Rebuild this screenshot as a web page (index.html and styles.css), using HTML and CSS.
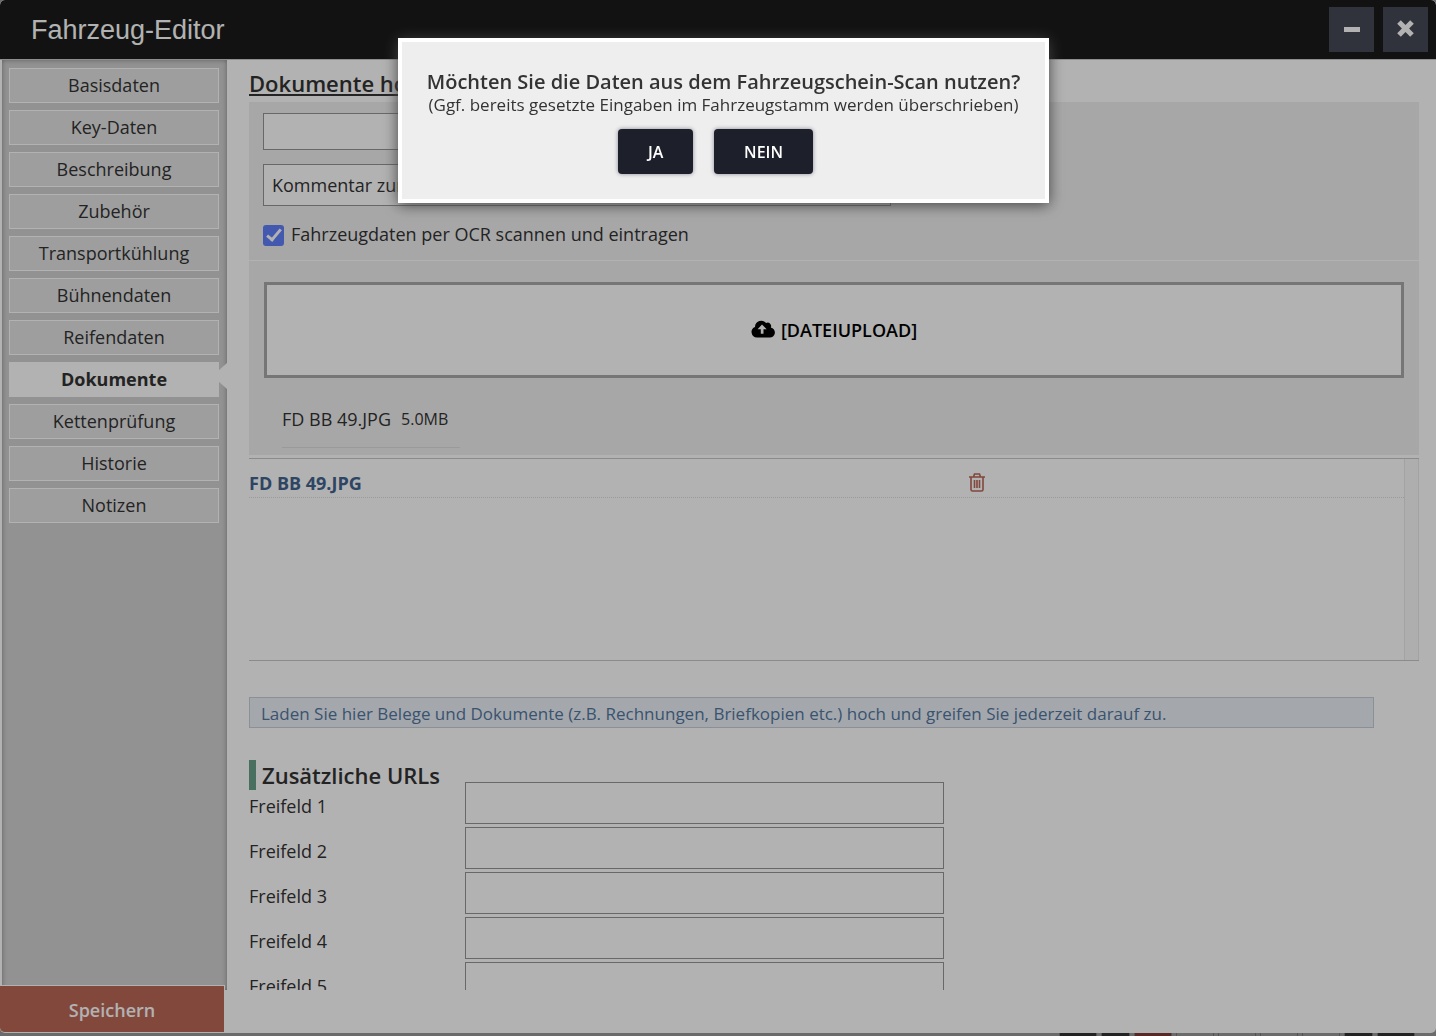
FILE: index.html
```html
<!DOCTYPE html>
<html lang="de">
<head>
  <meta charset="UTF-8">
  <meta name="viewport" content="width=device-width, initial-scale=1.0">
  <title>Fahrzeug-Editor</title>
  <link rel="stylesheet" href="styles.css">
</head>
<body>
<div class="editor">
  <header class="titlebar">
    <h1>Fahrzeug-Editor</h1>
    <div class="window-buttons">
      <button type="button" aria-label="Minimieren">
        <svg width="20" height="20" viewBox="0 0 20 20"><path d="M2 7h16v5H2z"/></svg>
      </button>
      <button type="button" aria-label="Schließen">
        <svg width="20" height="20" viewBox="0 0 20 20"><path d="M4.800 .2 9.500 4.900l4.700-4.700 3.600 3.600L13.100 8.500l4.700 4.700-3.600 3.600L9.500 12.100l-4.700 4.700-3.600-3.600L5.900 8.500 1.200 3.800z"/></svg>
      </button>
    </div>
  </header>

  <div class="body">
    <nav class="sidebar">
      <button type="button">Basisdaten</button>
      <button type="button">Key-Daten</button>
      <button type="button">Beschreibung</button>
      <button type="button">Zubehör</button>
      <button type="button">Transportkühlung</button>
      <button type="button">Bühnendaten</button>
      <button type="button">Reifendaten</button>
      <button type="button" class="active">Dokumente</button>
      <button type="button">Kettenprüfung</button>
      <button type="button">Historie</button>
      <button type="button">Notizen</button>
    </nav>

    <main class="content">
      <h2>Dokumente hochladen</h2>
      <div class="panel options">
        <select aria-label="Dokumentart"><option></option></select>
        <input type="text" class="comment" placeholder="Kommentar zum Dokument" aria-label="Kommentar">
        <div class="ocr">
          <input type="checkbox" id="ocr" checked>
          <label for="ocr">Fahrzeugdaten per OCR scannen und eintragen</label>
        </div>
      </div>
      <div class="panel upload">
        <button type="button" class="dropzone">
          <svg width="24" height="20" viewBox="0 0 24 20"><path fill-rule="evenodd" d="M6 17.500a5.500 5.500 0 0 1-2-10.600A6.400 6.400 0 0 1 15.200 2.900a3.500 3.500 0 0 1 4.600 4.700A5 5 0 0 1 18.500 17.500zM11 4.500 6.600 9.200H9.800v4.600h2.700V9.200h3.200z"/></svg>
          <span>[DATEIUPLOAD]</span>
        </button>
        <div class="queued"><span>FD BB 49.JPG</span><small>5.0MB</small></div>
      </div>

      <div class="documents">
        <div class="document-list">
          <div class="document">
            <a href="#">FD BB 49.JPG</a>
            <button type="button" aria-label="Löschen">
              <svg width="18" height="20" viewBox="0 0 18 20"><path d="M1 4h16M5.500 4l1-3h5l1 3M3 4v12.500a1.500 1.500 0 0 0 1.500 1.500h9a1.500 1.500 0 0 0 1.500-1.500V4M6.500 7v8M9 7v8M11.500 7v8"/></svg>
            </button>
          </div>
        </div>
        <div class="scroll-track"></div>
      </div>

      <p class="info">Laden Sie hier Belege und Dokumente (z.B. Rechnungen, Briefkopien etc.) hoch und greifen Sie jederzeit darauf zu.</p>

      <h3>Zusätzliche URLs</h3>
      <div class="field"><label for="frei1">Freifeld 1</label><input type="text" id="frei1"></div>
      <div class="field"><label for="frei2">Freifeld 2</label><input type="text" id="frei2"></div>
      <div class="field"><label for="frei3">Freifeld 3</label><input type="text" id="frei3"></div>
      <div class="field"><label for="frei4">Freifeld 4</label><input type="text" id="frei4"></div>
      <div class="field"><label for="frei5">Freifeld 5</label><input type="text" id="frei5"></div>
    </main>
  </div>

  <footer class="actions">
    <button type="button" class="save">Speichern</button>
  </footer>
</div>

<!-- Leiste hinter dem Editor -->
<div class="taskbar">
  <span class="dark"></span>
  <span class="dark short"></span>
  <span class="red"></span>
  <span></span>
  <span></span>
  <span></span>
  <span></span>
  <span class="dark short"></span>
  <span class="dark"></span>
</div>

<!-- Abfrage nach dem Scan -->
<div class="overlay">
  <div class="dialog" role="dialog" aria-labelledby="dialog-title">
    <h2 id="dialog-title">Möchten Sie die Daten aus dem Fahrzeugschein-Scan nutzen?</h2>
    <p>(Ggf. bereits gesetzte Eingaben im Fahrzeugstamm werden überschrieben)</p>
    <div class="dialog-buttons">
      <button type="button">JA</button>
      <button type="button">NEIN</button>
    </div>
  </div>
</div>
</body>
</html>
```
FILE: styles.css
```css
* {
  box-sizing: border-box;
}
body {
  margin: 0;
  height: 100vh;
  display: flex;
  flex-direction: column;
  overflow: hidden;
  background: #9a9a9a;
  color: #333;
  font-family: "Open Sans", sans-serif;
  font-size: 18px;
  line-height: 24px;
}
h1, h2, h3, p {
  margin: 0;
}
button, input, select {
  font: inherit;
  color: inherit;
}
button {
  cursor: pointer;
}
.editor {
  flex: 1;
  min-height: 0;
  display: flex;
  flex-direction: column;
  background: #fff;
  border-radius: 5px;
  overflow: hidden;
}

/* Titelleiste */
.titlebar {
  flex: none;
  display: flex;
  justify-content: space-between;
  align-items: center;
  height: 60px;
  padding: 0 8px 0 31px;
  background: #1a1a1a;
  border-bottom: 1px solid #ccc;
  border-radius: 5px 5px 0 0;
}
.titlebar h1 {
  color: #fff;
  font-family: "Liberation Sans", Arial, sans-serif;
  font-size: 27px;
  font-weight: normal;
}
.window-buttons {
  display: flex;
  gap: 9px;
}
.window-buttons button {
  display: flex;
  align-items: center;
  justify-content: center;
  width: 45px;
  height: 45px;
  padding: 0;
  border: none;
  background: #454955;
}
.window-buttons svg {
  fill: #fff;
}

.body {
  flex: 1;
  min-height: 0;
  display: flex;
}
.sidebar {
  flex: none;
  display: flex;
  flex-direction: column;
  gap: 7px;
  width: 225px;
  margin-left: 2px;
  padding: 8px 8px 0 7px;
  background: #d1d1d1;
  box-shadow: inset 0 0 5px #888;
}
.sidebar button {
  height: 35px;
  padding: 0 0 2px;
  background: #e3e3e3;
  border: 1px solid #fff;
}
.sidebar .active {
  position: relative;
  background: #fff;
  font-weight: bold;
}
.sidebar .active::after {
  content: "";
  position: absolute;
  top: 0;
  left: 100%;
  width: 9px;
  height: 26px;
  background: #fff;
  clip-path: polygon(0 8px, 100% 0, 100% 26px, 0 18px);
}

/* Inhalt */
.content {
  flex: 1;
  min-width: 0;
  padding: 8px 17px 0 22px;
  overflow: hidden;
}
.content h2 {
  height: 34px;
  font-size: 22px;
  font-weight: 600;
  line-height: 30px;
  text-decoration: underline;
}
.panel {
  background: #f0f0f0;
}
.options {
  display: flex;
  flex-direction: column;
  align-items: flex-start;
  padding: 11px 14px 14px;
  border-bottom: 1px solid #fff;
}
.options select,
.comment,
.field input {
  background: #fff;
  border: 1px solid #959595;
  border-radius: 0;
  padding: 0 8px;
}
.options select {
  width: 480px;
  height: 37px;
  margin-bottom: 14px;
}
.comment {
  width: 628px;
  height: 42px;
}
.comment::placeholder {
  color: #333;
}
.ocr {
  display: flex;
  align-items: center;
  gap: 7px;
  margin-top: 16px;
}
.ocr input {
  appearance: none;
  display: flex;
  justify-content: center;
  width: 21px;
  height: 21px;
  margin: 2px 0 0;
  border-radius: 3px;
  background: #607efb;
}
.ocr input:checked::before {
  content: "";
  box-sizing: border-box;
  width: 8px;
  height: 15px;
  margin-top: 1px;
  border: solid #fff;
  border-width: 0 3px 3px 0;
  transform: rotate(40deg);
}
.upload {
  padding: 21px 15px 7px;
}
.dropzone {
  display: flex;
  align-items: center;
  justify-content: center;
  gap: 6px;
  width: 100%;
  height: 96px;
  background: #fff;
  border: 3px solid #aaa;
  color: #000;
  font-weight: 600;
}
.queued {
  display: inline-flex;
  align-items: center;
  gap: 10px;
  height: 70px;
  margin-left: 18px;
  padding: 12px 12px 0 0;
  border-bottom: 1px solid #ddd;
  vertical-align: top;
}
.queued small {
  font-size: 16px;
}
.documents {
  display: flex;
  height: 203px;
  margin-top: 3px;
  border-top: 1px solid #c8c8c8;
  border-bottom: 1px solid #c8c8c8;
}
.document-list {
  flex: 1;
}
.document {
  display: grid;
  grid-template-columns: 5fr 3fr;
  align-items: center;
  height: 39px;
  padding: 10px 4px 0 0;
  border-bottom: 1px dotted #ddd;
}
.document a {
  color: #42638f;
  font-weight: bold;
  text-decoration: none;
}
.document button {
  justify-self: start;
  display: flex;
  padding: 0;
  border: none;
  background: none;
}
.document svg {
  fill: none;
  stroke: #bb6757;
  stroke-width: 1.6;
}
.scroll-track {
  width: 15px;
  background: #fafafa;
  border: solid #e8e8e8;
  border-width: 0 1px;
}
.info {
  margin: 36px 45px 32px 0;
  padding: 5px 11px 2px;
  background: #ebf1f8;
  border: 1px solid #c7cfd9;
  color: #54779f;
  font-size: 17px;
  line-height: 22px;
}
.content h3 {
  height: 30px;
  margin-bottom: -8px;
  padding-left: 6px;
  border-left: 7px solid #679f89;
  font-size: 22px;
  font-weight: 600;
  line-height: 30px;
}
.field {
  display: flex;
  align-items: center;
  margin-bottom: 3px;
}
.field label {
  width: 216px;
  padding-top: 6px;
}
.field input {
  width: 479px;
  height: 42px;
}

.actions {
  flex: none;
  display: flex;
  height: 43px;
}
.save {
  position: relative;
  width: 225px;
  height: 48px;
  margin-top: -5px;
  padding: 2px 0 0;
  background: #bb6757;
  border: solid #fff;
  border-width: 1px 1px 1px 0;
  border-radius: 0 0 0 5px;
  color: #fff;
  font-weight: 600;
}
.taskbar {
  flex: none;
  display: flex;
  justify-content: flex-end;
  gap: 4px;
  height: 3px;
  padding-right: 21px;
}
.taskbar span {
  width: 38px;
  border: solid #777;
  border-width: 0 1px;
}
.taskbar .short {
  width: 29px;
}
.taskbar .dark {
  background: #333;
}
.taskbar .red {
  background: #7d3a34;
}

/* Dialog */
.overlay {
  position: fixed;
  inset: 0;
  z-index: 10;
  display: flex;
  justify-content: center;
  align-items: flex-start;
  padding: 38px 0 0 11px;
  background: rgba(0, 0, 0, 0.3);
}
.dialog {
  padding: 28px 25px 25px;
  background: #eee;
  border: 4px solid #fff;
  box-shadow: 0 2px 14px #444;
  text-align: center;
}
.dialog h2 {
  font-size: 20px;
  font-weight: 600;
  line-height: 24px;
}
.dialog p {
  font-size: 17px;
  line-height: 22px;
}
.dialog-buttons {
  margin-top: 13px;
}
.dialog-buttons button {
  height: 45px;
  margin-right: 16px;
  padding: 0 30px;
  background: #1d202b;
  border: none;
  border-radius: 4px;
  box-shadow: 0 0 4px #889;
  color: #fff;
  font-size: 16px;
  font-weight: 600;
  vertical-align: top;
}
```
